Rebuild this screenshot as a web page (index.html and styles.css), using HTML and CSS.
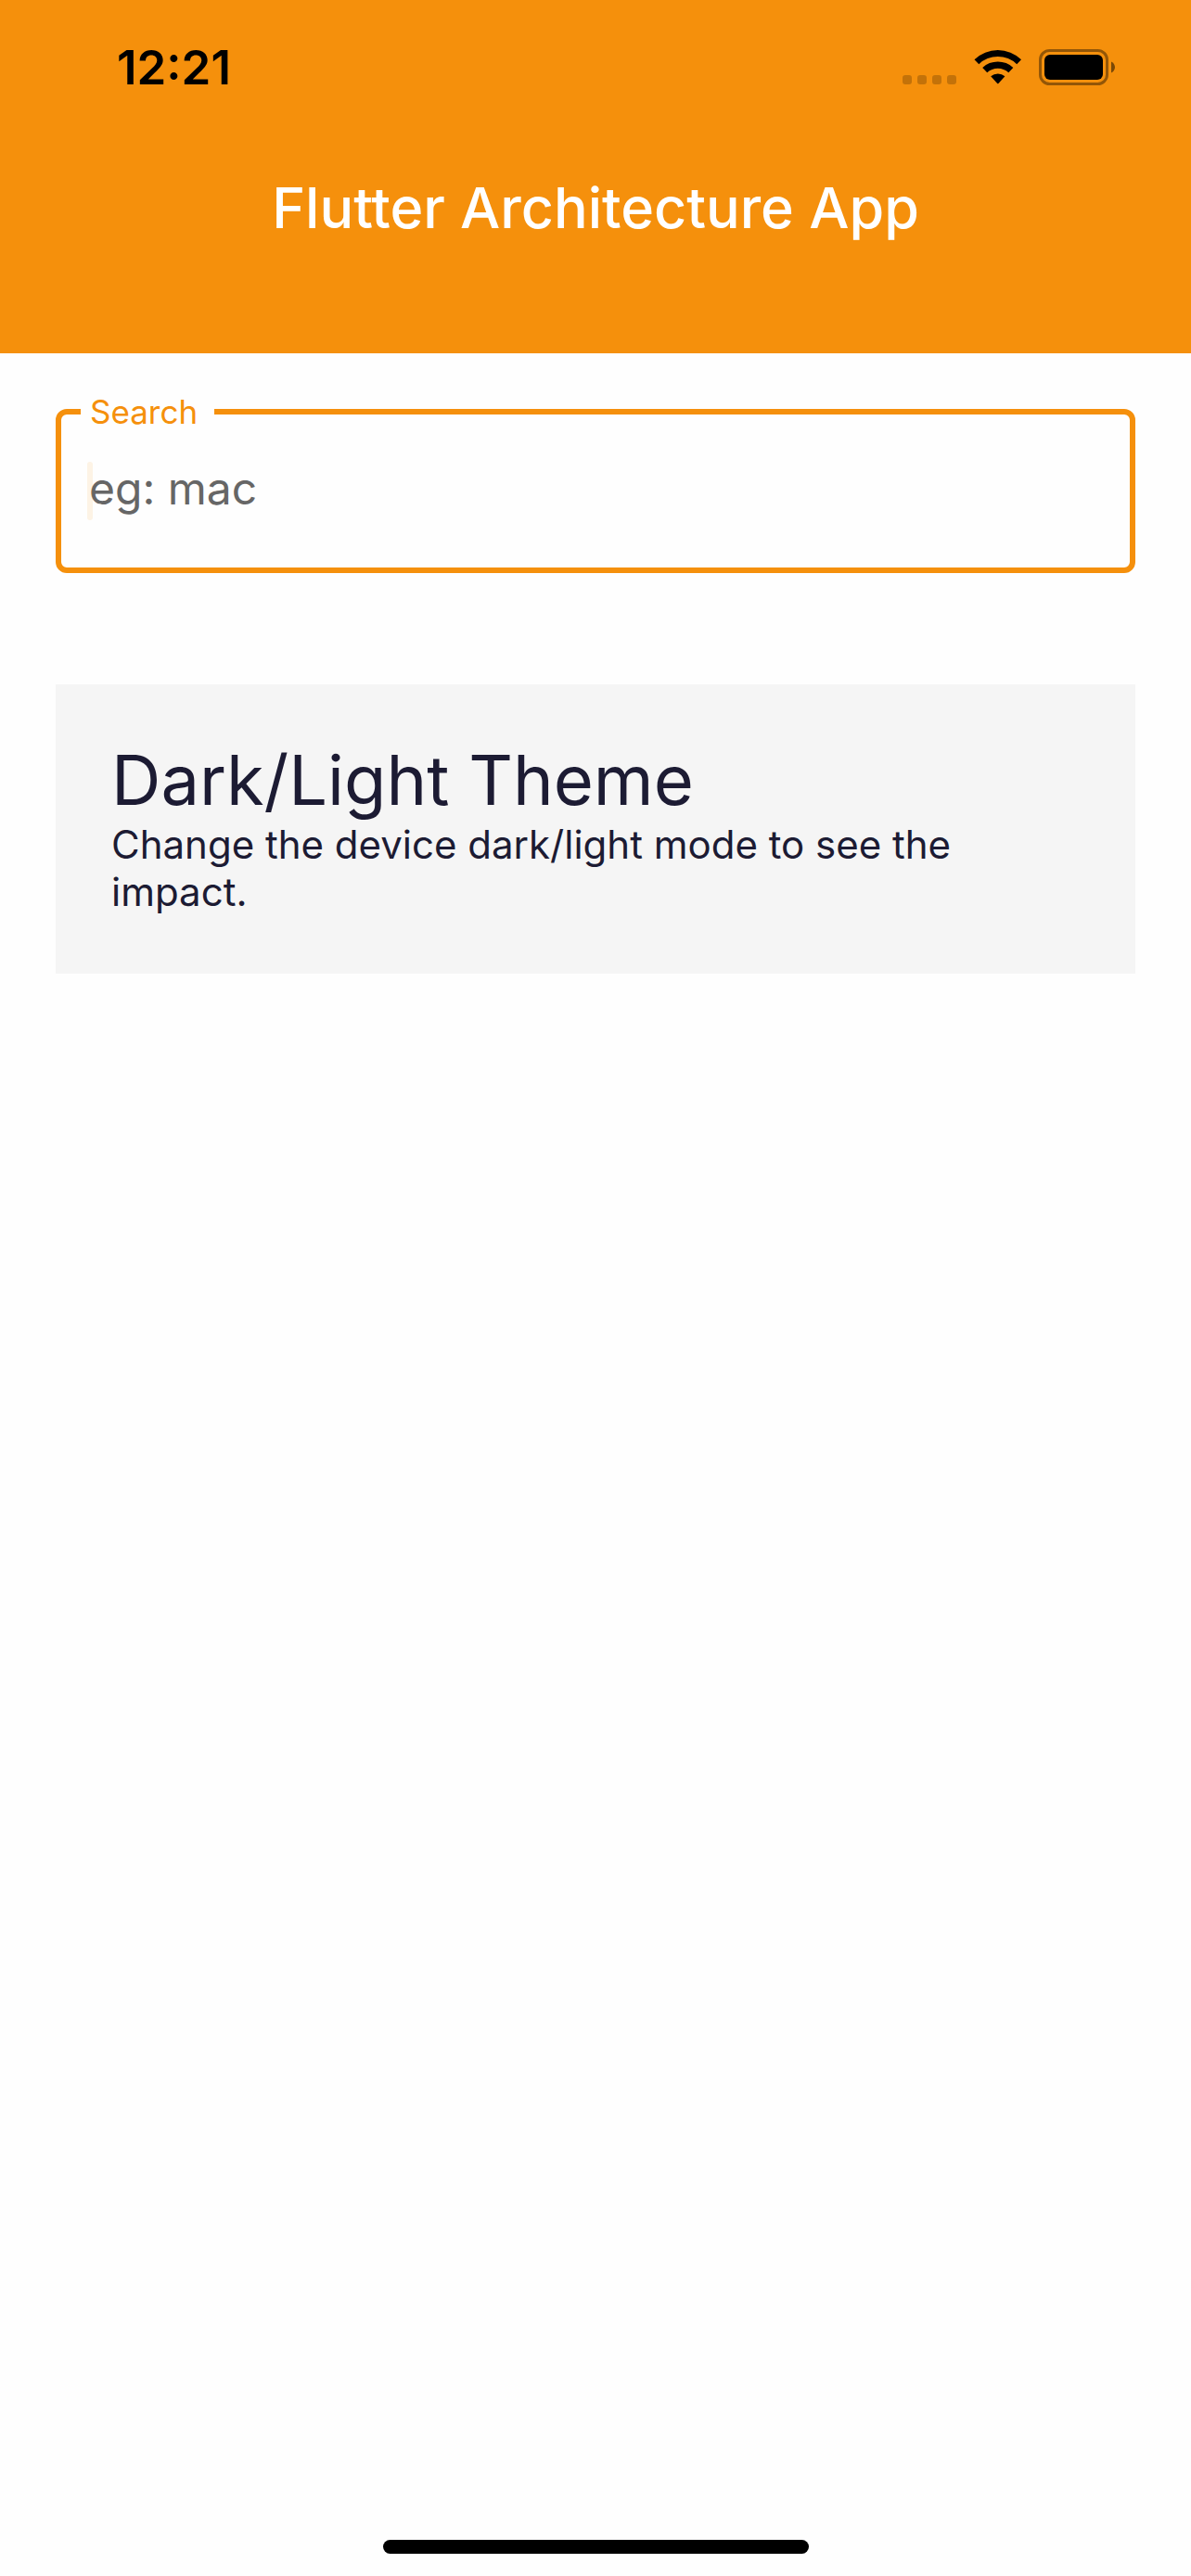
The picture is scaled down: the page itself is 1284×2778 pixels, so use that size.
FILE: index.html
```html
<!DOCTYPE html>
<html lang="en">
<head>
<meta charset="utf-8">
<meta name="viewport" content="width=device-width, initial-scale=1">
<title>Flutter Architecture App</title>
<link rel="stylesheet" href="styles.css">
</head>
<body>
<div class="app">
  <header class="app-bar">
    <div class="status-bar">
      <time class="clock">12:21</time>
      <div class="status-icons">
        <svg class="signal" width="58" height="38" viewBox="0 0 58 38" aria-hidden="true">
          <rect x="0" y="28" width="10" height="10" rx="3"/>
          <rect x="16" y="28" width="10" height="10" rx="3"/>
          <rect x="32" y="28" width="10" height="10" rx="3"/>
          <rect x="48" y="28" width="10" height="10" rx="3"/>
        </svg>
        <svg class="wifi" width="52" height="38" viewBox="0 0 52 38" aria-hidden="true">
          <path d="M0.5 11.2A36.5 36.5 0 0 1 51 11.2L46.200 16.200A29.500 29.500 0 0 0 5.300 16.200Z"/>
          <path d="M9.200 20A24 24 0 0 1 42.300 20L37.300 25.200A17 17 0 0 0 14.200 25.200Z"/>
          <path d="M18.200 29.300A11.500 11.500 0 0 1 33.400 29.300L26.400 37Q25.800 37.500 25.200 37Z"/>
        </svg>
        <svg class="battery" width="82" height="39" viewBox="0 0 82 39" aria-hidden="true">
          <rect class="battery-case" x="1.500" y="1.500" width="72" height="36" rx="10"/>
          <rect x="6" y="6" width="63" height="27" rx="6"/>
          <path class="battery-tip" d="M78 13.500C80.500 14.500 82 17 82 19.500S80.500 24.500 78 25.500Z"/>
        </svg>
      </div>
    </div>
    <h1 class="app-title">Flutter Architecture App</h1>
  </header>
  <main class="content">
    <fieldset class="search-field">
      <legend class="search-legend"><label for="search">Search</label></legend>
      <input class="search-input" id="search" type="text" placeholder="eg: mac">
      <span class="caret"></span>
    </fieldset>
    <section class="card">
      <h2 class="card-title">Dark/Light Theme</h2>
      <p class="card-text">Change the device dark/light mode to see the impact.</p>
    </section>
  </main>
  <div class="home-indicator"></div>
</div>
</body>
</html>
```
FILE: styles.css
```css
* {
  box-sizing: border-box;
}

body {
  margin: 0;
  background: #fefefe;
  color: #1c1b33;
  font-family: Inter, "Liberation Sans", sans-serif;
}

.app {
  display: flex;
  flex-direction: column;
  min-height: 100vh;
}

.app-bar {
  padding-bottom: 118px;
  background: #f5900c;
}

.status-bar {
  display: flex;
  justify-content: space-between;
  padding: 42px 82px 0 126px;
  color: #000;
}

.clock {
  font-size: 51px;
  font-weight: 600;
  line-height: 62px;
}

.status-icons {
  display: flex;
  gap: 19px;
  padding-top: 11px;
}

.signal {
  opacity: 0.2;
}

.wifi {
  margin-right: -1px;
}

.battery-case {
  fill: none;
  stroke: #000;
  stroke-width: 3;
  opacity: 0.4;
}

.battery-tip {
  opacity: 0.5;
}

.app-title {
  margin: 81px 0 0;
  color: #fff;
  font-size: 61px;
  font-weight: 500;
  line-height: 78px;
  text-align: center;
}

.content {
  display: flex;
  flex: 1;
  flex-direction: column;
  gap: 120px;
  padding: 42px 60px;
}

.search-field {
  position: relative;
  min-width: 0;
  margin: 0;
  padding: 0 28px;
  border: 6px solid #f5900c;
  border-radius: 12px;
}

.search-legend {
  margin-left: -7px;
  padding: 0 18px 0 10px;
  color: #f5900c;
  font-size: 35px;
  line-height: 42px;
}

.search-input {
  display: block;
  width: 100%;
  height: 147px;
  padding: 0 0 24px 2px;
  border: 0;
  outline: 0;
  background: transparent;
  color: #1c1b33;
  font: 48px Inter, "Liberation Sans", sans-serif;
}

.search-input::placeholder {
  color: #666;
  opacity: 1;
}

.caret {
  position: absolute;
  top: 33px;
  left: 28px;
  width: 6px;
  height: 63px;
  border-radius: 3px;
  background: #f5900c;
  opacity: 0.1;
}

.card {
  padding: 60px 60px 63px;
  background: #f5f5f5;
}

.card-title {
  margin: 0;
  font-size: 74px;
  font-weight: 400;
  line-height: 87px;
}

.card-text {
  margin: 0;
  font-size: 42px;
  line-height: 51px;
}

.home-indicator {
  align-self: center;
  width: 459px;
  height: 15px;
  margin-bottom: 24px;
  border-radius: 8px;
  background: #000;
}
```
